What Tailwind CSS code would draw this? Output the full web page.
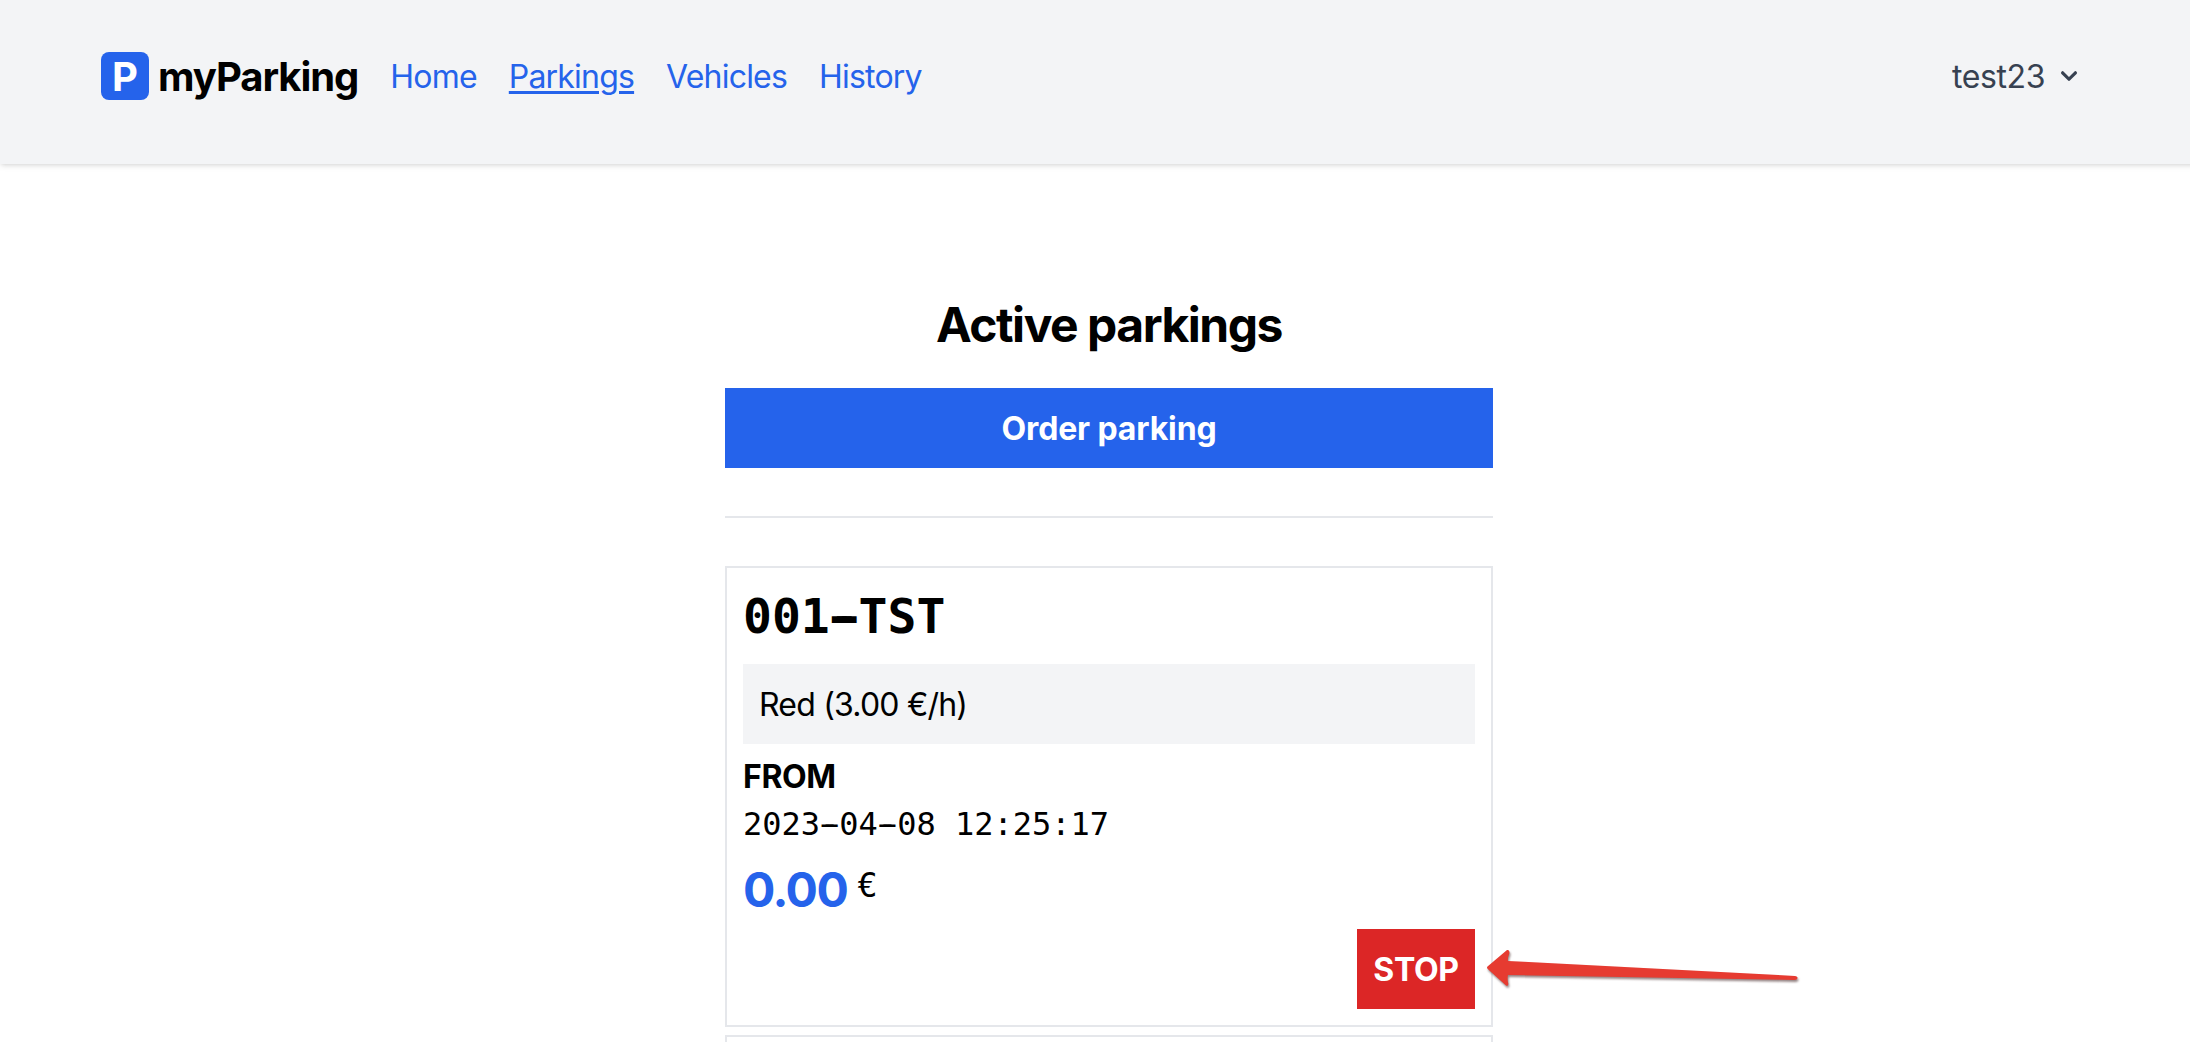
<!DOCTYPE html>
<html lang="en">
<head>
<meta charset="utf-8">
<title>myParking</title>
<script src="https://cdn.jsdelivr.net/npm/@tailwindcss/browser@4"></script>
</head>
<body class="h-[1042px] overflow-hidden bg-white font-['Inter',sans-serif] text-[32px] leading-[48px] tracking-[-0.8px] text-black">
<div class="w-[2218px]">
  <header class="flex h-[164px] items-start justify-between bg-[#f3f4f6] pt-[52px] pr-[133px] pl-[101px] shadow-[0_2px_6px_rgba(0,0,0,0.1),0_2px_4px_-2px_rgba(0,0,0,0.1)]">
    <nav class="flex items-start gap-8 text-[#2563eb]">
      <div class="flex items-start gap-[9px] text-[40px] font-bold tracking-[-1.05px] text-black">
        <div class="flex size-12 items-center justify-center rounded-lg bg-[#2563eb] pt-0.5 tracking-normal text-white">P</div>
        <div class="pt-px">myParking</div>
      </div>
      <a class="pt-px">Home</a>
      <a class="pt-px underline decoration-[3px] underline-offset-[3px]">Parkings</a>
      <a class="pt-px">Vehicles</a>
      <a class="pt-px">History</a>
    </nav>
    <button class="flex items-start gap-2 tracking-[-0.4px] text-[#374151]">
      <span class="pt-px">test23</span>
      <svg class="mt-2 size-8" viewBox="0 0 20 20" fill="currentColor"><path fill-rule="evenodd" d="M5.293 7.293a1 1 0 011.414 0L10 10.586l3.293-3.293a1 1 0 111.414 1.414l-4 4a1 1 0 01-1.414 0l-4-4a1 1 0 010-1.414z" clip-rule="evenodd"/></svg>
    </button>
  </header>
  <main class="mx-auto flex w-[768px] flex-col pt-[125px]">
    <h1 class="mb-[27px] text-center text-[48px] leading-[72px] font-bold tracking-[-1.49px]">Active parkings</h1>
    <button class="h-20 bg-[#2563eb] pt-0.5 font-bold tracking-[-0.13px] text-white">Order parking</button>
    <div class="my-12 h-0.5 bg-[#e5e7eb]"></div>
    <div class="flex flex-col gap-2">
      <section class="flex h-[461px] flex-col border-2 border-[#e5e7eb] px-4 pt-3 pb-4">
        <h2 class="mb-3 font-['DejaVu_Sans_Mono',monospace] text-[48px] leading-[72px] font-bold tracking-normal">001<span class="[text-shadow:-5px_0_0_#000,5px_0_0_#000]">-</span>TST</h2>
        <div class="mb-2 bg-[#f3f4f6] px-4 pt-[17px] pb-[15px]">Red (3.00 €/h)</div>
        <div class="h-12 pt-px font-bold tracking-[-0.4px]">FROM</div>
        <div class="font-['DejaVu_Sans_Mono',monospace] tracking-normal">2023<span class="[text-shadow:-4px_0_0_#000,4px_0_0_#000]">-</span>04<span class="[text-shadow:-4px_0_0_#000,4px_0_0_#000]">-</span>08 12:25:17</div>
        <div class="flex h-[73px] items-start gap-2.5">
          <span class="pt-[18px] text-[48px] font-bold tracking-[-1.5px] text-[#2563eb]">0.00</span>
          <span class="pt-[13px] font-['DejaVu_Sans_Mono',monospace] text-[34px] tracking-normal">€</span>
        </div>
        <div class="relative mt-2 self-end">
          <button class="h-20 w-[118px] bg-[#dc2626] pt-0.5 font-bold tracking-[-0.32px] text-white">STOP</button>
          <svg class="absolute top-4 left-[126px] h-12 w-80 drop-shadow-[1px_2px_1px_rgba(60,30,30,0.55)]" viewBox="0 0 320 48" fill="#e63b31"><path d="M4.5 21.5Q3.5 22.5 4.5 23.7L23 40.5Q25.5 41.5 25.3 38.5Q24 34 25 30L312 35Q315 34 314.5 32.5Q314 31 312 31L25 16Q24.5 13 26.5 8Q26.5 4.500 24 5Z"/></svg>
        </div>
      </section>
      <section class="h-[7px] border-2 border-b-0 border-[#e5e7eb]"></section>
    </div>
  </main>
</div>
</body>
</html>
